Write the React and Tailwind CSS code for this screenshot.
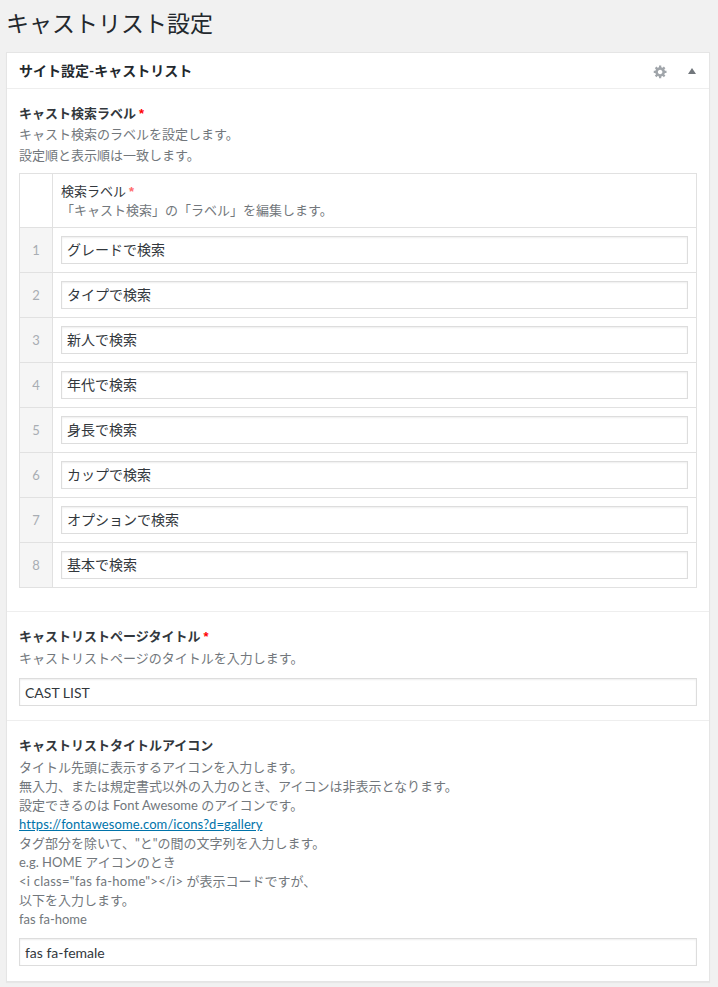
import React from 'react';

const FONT = "font-['Lato','Noto_Sans_CJK_JP',sans-serif]";

const LABELS = ['グレードで検索', 'タイプで検索', '新人で検索', '年代で検索', '身長で検索', 'カップで検索', 'オプションで検索', '基本で検索'];

const ICON_HELP = [
    'タイトル先頭に表示するアイコンを入力します。',
    '無入力、または規定書式以外の入力のとき、アイコンは非表示となります。',
    '設定できるのは Font Awesome のアイコンです。',
];

function TextInput({ value, className = '' }) {
    return (
        <input
            type="text"
            readOnly
            value={value}
            className={`block w-full h-[28px] px-[5px] bg-white border border-[#dddddd] shadow-[inset_0_1px_2px_rgba(0,0,0,0.07)] text-[14px] text-[#32373c] outline-none ${className}`}
        />
    );
}

function Required({ className = 'text-[#ff0000]' }) {
    return <span className={`ml-[3px] font-['Liberation_Sans',sans-serif] font-bold ${className}`}>*</span>;
}

export default function App() {
    return (
        <div className={`${FONT} min-h-[987px] bg-[#f1f1f1] text-[13px] leading-[19px] text-[#72777c] overflow-hidden`}>
            <h1 className="h-[52px] pl-[6px] pt-[8px] text-[23px] leading-[30px] font-normal text-[#23282d]">キャストリスト設定</h1>

            <div className="ml-[6px] mr-[8px] bg-white border border-[#e5e5e5] shadow-[0_1px_1px_rgba(0,0,0,0.04)]">
                <div className="flex items-center justify-between h-[36px] pl-[12px] pr-[13px] border-b border-[#eeeeee]">
                    <h2 className="pb-[1px] text-[14px] font-bold text-[#23282d]">サイト設定-キャストリスト</h2>
                    <div className="flex items-center gap-[20px] mt-[1px]">
                        <svg width="15" height="15" viewBox="0 0 20 20" fill="#a0a5aa">
                            <path d="M18 12h-2.18c-.17.7-.44 1.35-.81 1.93l1.54 1.54-2.1 2.1-1.54-1.54c-.58.36-1.23.63-1.91.79V19H8v-2.18c-.68-.16-1.33-.43-1.91-.79l-1.54 1.54-2.12-2.12 1.54-1.54c-.36-.58-.63-1.23-.79-1.91H1V9.03h2.17c.16-.7.44-1.35.8-1.94L2.43 5.55l2.1-2.1 1.54 1.54c.58-.37 1.24-.64 1.93-.81V2h3v2.18c.68.16 1.33.43 1.91.79l1.54-1.54 2.12 2.12-1.54 1.54c.36.59.64 1.24.8 1.94H18V12zm-8.5 1.5c1.66 0 3-1.34 3-3s-1.34-3-3-3-3 1.34-3 3 1.34 3 3 3z" />
                        </svg>
                        <span className="w-0 h-0 border-x-[4px] border-x-transparent border-b-[6px] border-b-[#72777c]" />
                    </div>
                </div>

                {/* Search labels */}
                <div className="pt-[15px] px-[12px] pb-[23px] border-b border-[#eeeeee]">
                    <div className="font-bold text-[#32373c]">キャスト検索ラベル<Required /></div>
                    <p className="mt-[1px] leading-[21px]">キャスト検索のラベルを設定します。<br />設定順と表示順は一致します。</p>
                    <div className="mt-[7px] border border-[#e1e1e1]">
                        <div className="flex h-[54px] border-b border-[#e1e1e1]">
                            <div className="w-[33px] border-r border-[#e1e1e1]" />
                            <div className="pl-[8px] pt-[8px]">
                                <div className="text-[#32373c]">検索ラベル<Required className="text-[#ff6b6b]" /></div>
                                <div className="text-[#72777c]">「キャスト検索」の「ラベル」を編集します。</div>
                            </div>
                        </div>
                        {LABELS.map((label, i) => (
                            <div key={label} className={i < 7 ? 'flex h-[45px] border-b border-[#e1e1e1]' : 'flex h-[44px]'}>
                                <div className="flex items-center justify-center w-[33px] bg-[#f5f5f5] border-r border-[#e1e1e1] text-[#a8adb3]">{i + 1}</div>
                                <div className="flex-1 px-[8px] pt-[8px]">
                                    <TextInput value={label} className="pb-[2px]" />
                                </div>
                            </div>
                        ))}
                    </div>
                </div>

                {/* Page title */}
                <div className="pt-[15px] px-[12px] pb-[14px] border-b border-[#eeeeee]">
                    <div className="font-bold text-[#32373c]">キャストリストページタイトル<Required /></div>
                    <p className="mt-[2px] mb-[9px] leading-[21px]">キャストリストページのタイトルを入力します。</p>
                    <TextInput value="CAST LIST" />
                </div>

                {/* Title icon */}
                <div className="pt-[15px] px-[12px] pb-[15px]">
                    <div className="font-bold text-[#32373c]">キャストリストタイトルアイコン</div>
                    <div className="mt-[3px] mb-[9px]">
                        {ICON_HELP.map(line => <div key={line}>{line}</div>)}
                        <a href="#" className="block tracking-[0.1px] text-[#0073aa] underline">https://fontawesome.com/icons?d=gallery</a>
                        <div>タグ部分を除いて、"と"の間の文字列を入力します。</div>
                        <div>e.g. HOME アイコンのとき</div>
                        <div><span className="tracking-[0.25px]">{'<i class="fas fa-home"></i>'}</span> が表示コードですが、</div>
                        <div>以下を入力します。</div>
                        <div>fas fa-home</div>
                    </div>
                    <TextInput value="fas fa-female" />
                </div>
            </div>
        </div>
    );
}
